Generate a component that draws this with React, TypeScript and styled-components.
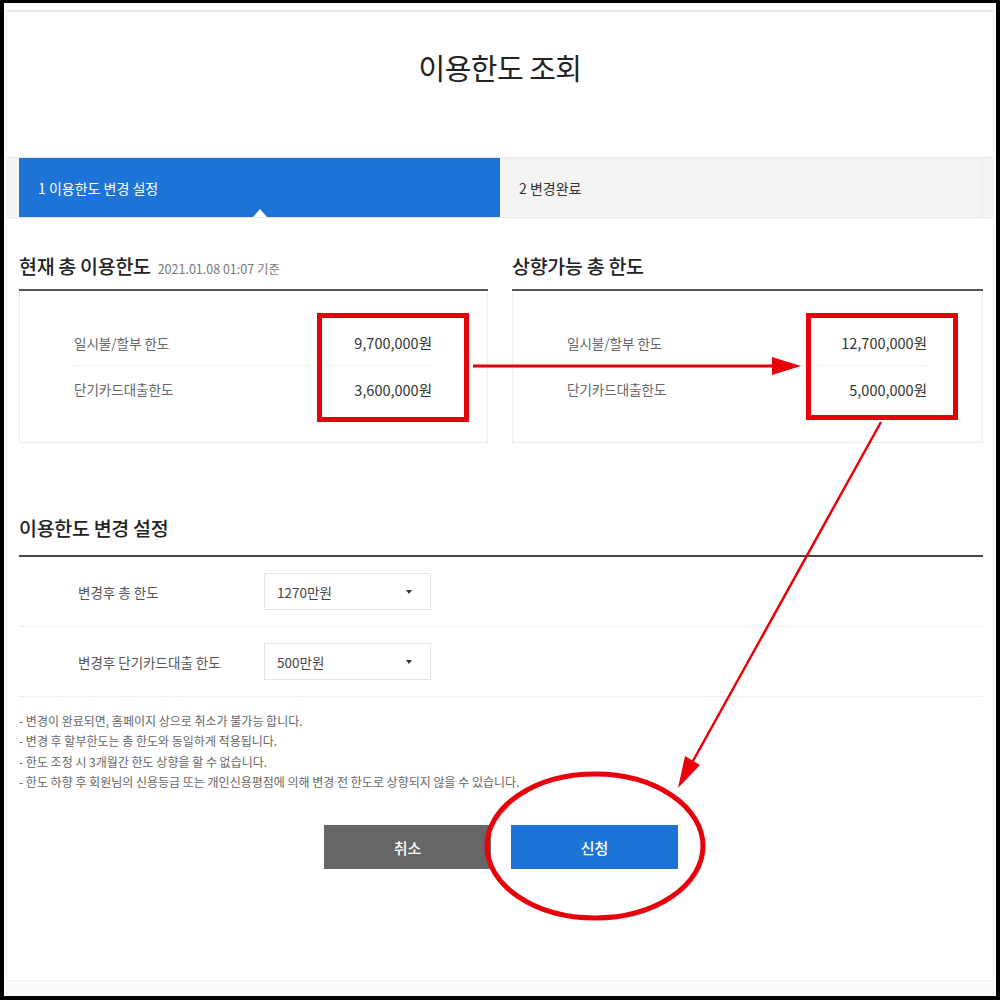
import * as React from "react";
import styled, { createGlobalStyle } from "styled-components";

const GlobalStyle = createGlobalStyle`
  html, body {
    margin: 0;
    padding: 0;
    background: #000;
  }
  * {
    box-sizing: border-box;
  }
  body {
    font-family: "Noto Sans CJK KR", "Noto Sans", sans-serif;
    color: #222;
  }
`;

const currentLimits = [
  { label: "일시불/할부 한도", value: "9,700,000원" },
  { label: "단기카드대출한도", value: "3,600,000원" }
];

const raisableLimits = [
  { label: "일시불/할부 한도", value: "12,700,000원" },
  { label: "단기카드대출한도", value: "5,000,000원" }
];

const settings = [
  { label: "변경후 총 한도", value: "1270만원" },
  { label: "변경후 단기카드대출 한도", value: "500만원" }
];

const notes = [
  "- 변경이 완료되면, 홈페이지 상으로 취소가 불가능 합니다.",
  "- 변경 후 할부한도는 총 한도와 동일하게 적용됩니다.",
  "- 한도 조정 시 3개월간 한도 상향을 할 수 없습니다.",
  "- 한도 하향 후 회원님의 신용등급 또는 개인신용평점에 의해 변경 전 한도로 상향되지 않을 수 있습니다."
];

export default function App() {
  return (
    <>
      <GlobalStyle />
      <Page>
        <Sheet>
          <TopRule />
          <Title>이용한도 조회</Title>

          <StepBand>
            <Steps>
              <Step active>1 이용한도 변경 설정</Step>
              <Step>2 변경완료</Step>
            </Steps>
          </StepBand>

          <Content>
            <Columns>
              <LimitPanel title="현재 총 이용한도" sub="2021.01.08 01:07 기준" rows={currentLimits} />
              <LimitPanel title="상향가능 총 한도" rows={raisableLimits} />
            </Columns>

            <SettingHeading>이용한도 변경 설정</SettingHeading>
            {settings.map(s => (
              <SettingRow key={s.label}>
                <SettingLabel>{s.label}</SettingLabel>
                <Select>
                  {s.value}
                  <Caret />
                </Select>
              </SettingRow>
            ))}

            <Notes>
              {notes.map(n => (
                <li key={n}>{n}</li>
              ))}
            </Notes>

            <Buttons>
              <Button tone="gray">취소</Button>
              <Button tone="blue">신청</Button>
            </Buttons>
          </Content>

          <FooterStrip />
        </Sheet>

        {/* red markup drawn over the screenshot */}
        <Annotations width="1000" height="1000" viewBox="0 0 1000 1000">
          <rect x="319.5" y="315.5" width="147" height="104" fill="none" stroke="#e8000b" strokeWidth="5" />
          <rect x="808.5" y="315.5" width="147" height="102" fill="none" stroke="#e8000b" strokeWidth="5" />
          <line x1="473" y1="366" x2="774" y2="366" stroke="#e8000b" strokeWidth="3" />
          <polygon points="772,357 801,366 772,375" fill="#e8000b" />
          <line x1="881" y1="422" x2="693" y2="761" stroke="#e8000b" strokeWidth="2.5" />
          <polygon points="678,788 685,756 700,765" fill="#e8000b" />
          <ellipse cx="595" cy="846" rx="108" ry="72" fill="none" stroke="#e8000b" strokeWidth="5" />
        </Annotations>
      </Page>
    </>
  );
}

function LimitPanel(props: { title: string; sub?: string; rows: { label: string; value: string }[] }) {
  return (
    <Panel>
      <PanelHeading>
        {props.title}
        {props.sub && <HeadingSub>{props.sub}</HeadingSub>}
      </PanelHeading>
      <PanelBox>
        {props.rows.map((r, i) => (
          <LimitRow key={r.label} last={i === props.rows.length - 1}>
            <LimitLabel>{r.label}</LimitLabel>
            <LimitValue>{r.value}</LimitValue>
          </LimitRow>
        ))}
      </PanelBox>
    </Panel>
  );
}

const Page = styled.div`
  position: relative;
  width: 1000px;
  height: 1000px;
  border-style: solid;
  border-color: #000;
  border-width: 3px 4px 4px 4px;
  background: #fff;
  overflow: hidden;
`;

const Sheet = styled.div`
  height: 100%;
  display: flex;
  flex-direction: column;
  margin: 0 2px;
  border-left: 1px solid #f0f0f0;
  border-right: 1px solid #f0f0f0;
`;

const TopRule = styled.div`
  height: 2px;
  margin-top: 7px;
  background: #e6e6e6;
`;

const Title = styled.h1`
  margin: 35px 0 0;
  height: 40px;
  line-height: 40px;
  text-align: center;
  font-size: 29px;
  font-weight: 400;
  color: #222;
  letter-spacing: -0.5px;
`;

const StepBand = styled.div`
  margin-top: 70px;
  background: #f5f5f5;
  border-top: 1px solid #e8e8e8;
  border-bottom: 1px solid #e8e8e8;
  padding-left: 12px;
`;

const Steps = styled.div`
  display: grid;
  grid-template-columns: 481px 483px;
  height: 59px;
`;

const Step = styled.div<{ active?: boolean }>`
  position: relative;
  display: flex;
  align-items: center;
  padding-left: 19px;
  font-size: 14px;
  color: ${p => (p.active ? "#fff" : "#333")};
  background: ${p => (p.active ? "#1e74d6" : "#f4f4f4")};
  border-right: ${p => (p.active ? "none" : "1px solid #ebebeb")};

  &::after {
    content: "";
    display: ${p => (p.active ? "block" : "none")};
    position: absolute;
    left: 234px;
    bottom: 0;
    border-left: 7px solid transparent;
    border-right: 7px solid transparent;
    border-bottom: 8px solid #fff;
  }
`;

const Content = styled.div`
  padding-left: 12px;
  width: 976px;
`;

const Columns = styled.div`
  display: grid;
  grid-template-columns: 469px 471px;
  column-gap: 24px;
  margin-top: 35px;
`;

const Panel = styled.section`
  display: flex;
  flex-direction: column;
`;

const PanelHeading = styled.h2`
  margin: 0;
  height: 38px;
  padding-bottom: 10px;
  line-height: 26px;
  font-size: 19.5px;
  font-weight: 500;
  color: #222;
  border-bottom: 2px solid #555;
  letter-spacing: -0.3px;
  white-space: nowrap;
`;

const HeadingSub = styled.span`
  margin-left: 7px;
  font-size: 12.5px;
  font-weight: 400;
  color: #777;
  letter-spacing: 0;
`;

const PanelBox = styled.div`
  padding: 29px 55px 30px 54px;
  border: 1px solid #ebebeb;
  border-top: none;
`;

const LimitRow = styled.div<{ last?: boolean }>`
  display: flex;
  justify-content: space-between;
  align-items: center;
  height: 46px;
  border-bottom: ${p => (p.last ? "none" : "1px solid #f0f0f0")};
`;

const LimitLabel = styled.span`
  font-size: 13.5px;
  color: #666;
`;

const LimitValue = styled.span`
  font-size: 14.5px;
  color: #333;
`;

const SettingHeading = styled(PanelHeading)`
  margin-top: 72px;
  height: 42px;
  padding-bottom: 14px;
  border-bottom: 2px solid #4a4a4a;
`;

const SettingRow = styled.div`
  display: flex;
  align-items: center;
  height: 70px;
  padding-left: 59px;
  border-bottom: 1px solid #efefef;
`;

const SettingLabel = styled.span`
  width: 186px;
  font-size: 13.5px;
  color: #555;
`;

const Select = styled.div`
  position: relative;
  display: flex;
  align-items: center;
  width: 167px;
  height: 37px;
  padding-left: 12px;
  border: 1px solid #e5e5e5;
  font-size: 13.5px;
  color: #444;
`;

const Caret = styled.span`
  position: absolute;
  right: 18px;
  top: 16px;
  border-left: 3.5px solid transparent;
  border-right: 3.5px solid transparent;
  border-top: 4px solid #333;
`;

const Notes = styled.ul`
  list-style: none;
  margin: 14px 0 0;
  padding: 0;
  font-size: 12px;
  line-height: 20.3px;
  color: #666;
`;

const Buttons = styled.div`
  display: flex;
  justify-content: center;
  gap: 20px;
  margin-top: 33px;
`;

const Button = styled.button<{ tone: "gray" | "blue" }>`
  width: 167px;
  height: 44px;
  border: none;
  font-family: inherit;
  font-size: 15px;
  font-weight: 500;
  color: #fff;
  background: ${p => (p.tone === "blue" ? "#1e74d6" : "#666")};
`;

const FooterStrip = styled.div`
  margin-top: auto;
  height: 16px;
  background: #fafafa;
  border-top: 1px solid #f2f2f2;
`;

const Annotations = styled.svg`
  position: absolute;
  top: -3px;
  left: -4px;
  pointer-events: none;
`;
